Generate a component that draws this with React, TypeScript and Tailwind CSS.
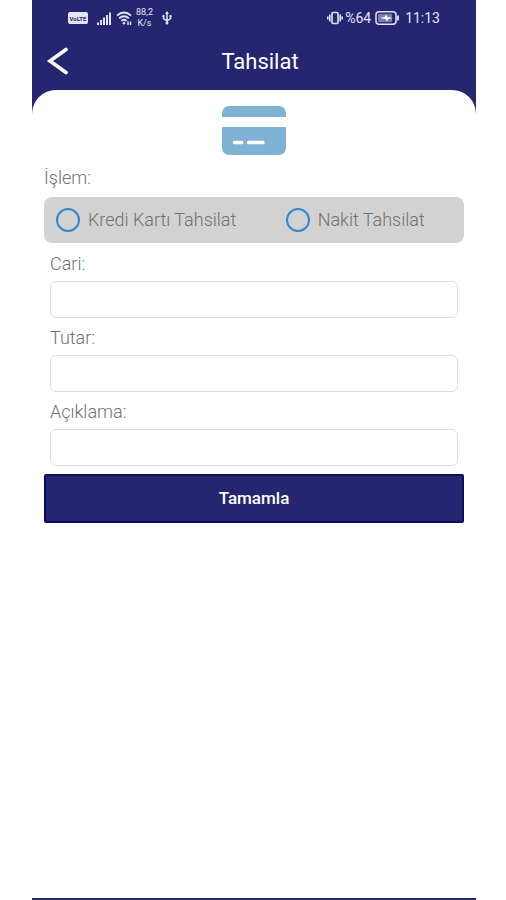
import React, { useState } from 'react';

const PAYMENT_TYPES = [
    { id: 'card', label: 'Kredi Kartı Tahsilat' },
    { id: 'cash', label: 'Nakit Tahsilat' },
];

const FIELDS = [
    { id: 'cari', label: 'Cari:' },
    { id: 'tutar', label: 'Tutar:' },
    { id: 'aciklama', label: 'Açıklama:' },
];

const StatusBar: React.FC = () => (
    <div className="flex h-9 items-center justify-between pl-9 pr-9 text-[#e4e4f6]">
        <div className="flex items-center gap-1">
            <span className="mr-1 flex h-3 w-5 items-center justify-center rounded-xs bg-[#e4e4f6] text-[6px] font-bold text-[#262570]">VoLTE</span>
            <svg className="h-4 w-4" viewBox="0 0 16 16" fill="currentColor">
                <path d="M1 12.500h2V15H1zM4 10h2v5H4zM7 7.500h2V15H7zM10 5h2v10h-2zM13 2.500h2V15h-2z" />
            </svg>
            <svg className="h-4 w-4" viewBox="0 0 16 16" fill="none" stroke="currentColor" strokeWidth="1.900">
                <path d="M1 5.500Q8-.5 15 5.500M3.200 8.300Q8 4 12.800 8.300M5.400 11Q8 8.700 10.600 11" />
                <circle cx="8" cy="13.200" r="1.300" fill="currentColor" stroke="none" />
                <path d="M12 11.500V15M14.500 11.500V15" strokeWidth="1.400" />
            </svg>
            <span className="flex flex-col items-center text-[9px] leading-[11px]">
                <span>88,2</span>
                <span>K/s</span>
            </span>
            <svg className="ml-1 h-4 w-3" viewBox="0 0 12 16" fill="none" stroke="currentColor" strokeWidth="1.500">
                <path d="M6 3v10M2.500 6v2.500L6 11M9.500 6v2.500L6 11" />
                <path d="M6 1l2 3H4z" fill="currentColor" stroke="none" />
                <circle cx="6" cy="13" r="1.500" fill="currentColor" stroke="none" />
                <path d="M1.500 5h2v2h-2zM8.500 5h2v2h-2z" fill="currentColor" stroke="none" />
            </svg>
        </div>
        <div className="flex items-center text-sm">
            <svg className="h-4 w-4" viewBox="0 0 16 16" fill="none" stroke="currentColor" strokeWidth="1.600">
                <rect x="5" y="2.500" width="6" height="11" rx="1" />
                <path d="M2.800 4.500v7M.8 6.500v3M13.200 4.500v7M15.200 6.500v3" />
            </svg>
            <span className="ml-0.5">%64</span>
            <svg className="ml-1 h-4 w-6" viewBox="0 0 24 16" fill="none" stroke="currentColor" strokeWidth="1.500">
                <rect x="1" y="1.700" width="20" height="12.600" rx="3" />
                <rect x="3" y="3.700" width="14" height="8.600" rx="1" fill="currentColor" fillOpacity=".45" stroke="none" />
                <path d="M5 8l4.500-1L11 4.800 12.500 7 18 8l-4.500 1-1.500 2.200L10.500 9z" fill="#fff" stroke="none" />
                <path d="M23 5.500v5" strokeWidth="1.800" />
            </svg>
            <span className="ml-1.5">11:13</span>
        </div>
    </div>
);

const CreditCardIcon: React.FC = () => (
    <svg className="mx-auto h-[49px] w-16" viewBox="0 0 64 49" fill="#7fb2d5">
        <path d="M7 0h50a7 7 0 0 1 7 7v4H0V7a7 7 0 0 1 7-7z" />
        <path d="M0 21h64v21a7 7 0 0 1-7 7H7a7 7 0 0 1-7-7z" />
        <path d="M12.500 36.500H20M26.500 36.500H41" stroke="#fff" strokeWidth="3.400" strokeLinecap="round" />
    </svg>
);

const App: React.FC = () => {
    const [paymentType, setPaymentType] = useState('');

    return (
        <div className="min-h-screen bg-white pl-8 pr-[30px] font-['Roboto','Liberation_Sans',sans-serif]">
            <div className="flex min-h-screen flex-col bg-[#262570]">
                <header>
                    <StatusBar />
                    <div className="grid h-[54px] grid-cols-[52px_1fr_40px] items-center pb-1">
                        <button type="button" aria-label="Geri" className="flex h-full items-center justify-center text-white">
                            <svg className="h-7 w-6" viewBox="0 0 24 28" fill="none" stroke="currentColor" strokeWidth="3.600" strokeLinecap="round" strokeLinejoin="miter">
                                <path d="M20 2.500L4 14l16 11.500" />
                            </svg>
                        </button>
                        <h1 className="text-center text-[22px] text-white">Tahsilat</h1>
                    </div>
                </header>

                <main className="mb-0.5 flex-1 rounded-t-3xl bg-white px-3 pt-4">
                    <CreditCardIcon />
                    <form onSubmit={(e) => e.preventDefault()}>
                        <fieldset className="text-lg text-[#707070]">
                            <legend className="flex h-[42px] items-center pt-1 font-light">İşlem:</legend>
                            <div className="grid h-[46px] grid-cols-[58fr_42fr] items-center rounded-lg bg-[#d2d2d2] px-3">
                                {PAYMENT_TYPES.map((type) => (
                                    <label key={type.id} className="flex items-center gap-2 font-light">
                                        <input
                                            type="radio"
                                            name="paymentType"
                                            checked={paymentType === type.id}
                                            onChange={() => setPaymentType(type.id)}
                                            className="h-6 w-6 appearance-none rounded-full border-2 border-[#3488ce] checked:border-8"
                                        />
                                        {type.label}
                                    </label>
                                ))}
                            </div>
                        </fieldset>

                        <div className="px-1.5 pb-2 pt-px">
                            {FIELDS.map((field) => (
                                <div key={field.id}>
                                    <label htmlFor={field.id} className="flex h-[37px] items-center pt-0.5 text-lg font-light text-[#707070]">{field.label}</label>
                                    <input id={field.id} type="text" className="block h-[37px] w-full rounded-md border border-[#dedede] px-3 text-lg text-gray-700" />
                                </div>
                            ))}
                        </div>

                        <button type="submit" className="h-[49px] w-full rounded-xs border-2 border-[#0f0b60] bg-[#262570] text-[17px] font-medium text-white">Tamamla</button>
                    </form>
                </main>
            </div>
        </div>
    );
};

export default App;
